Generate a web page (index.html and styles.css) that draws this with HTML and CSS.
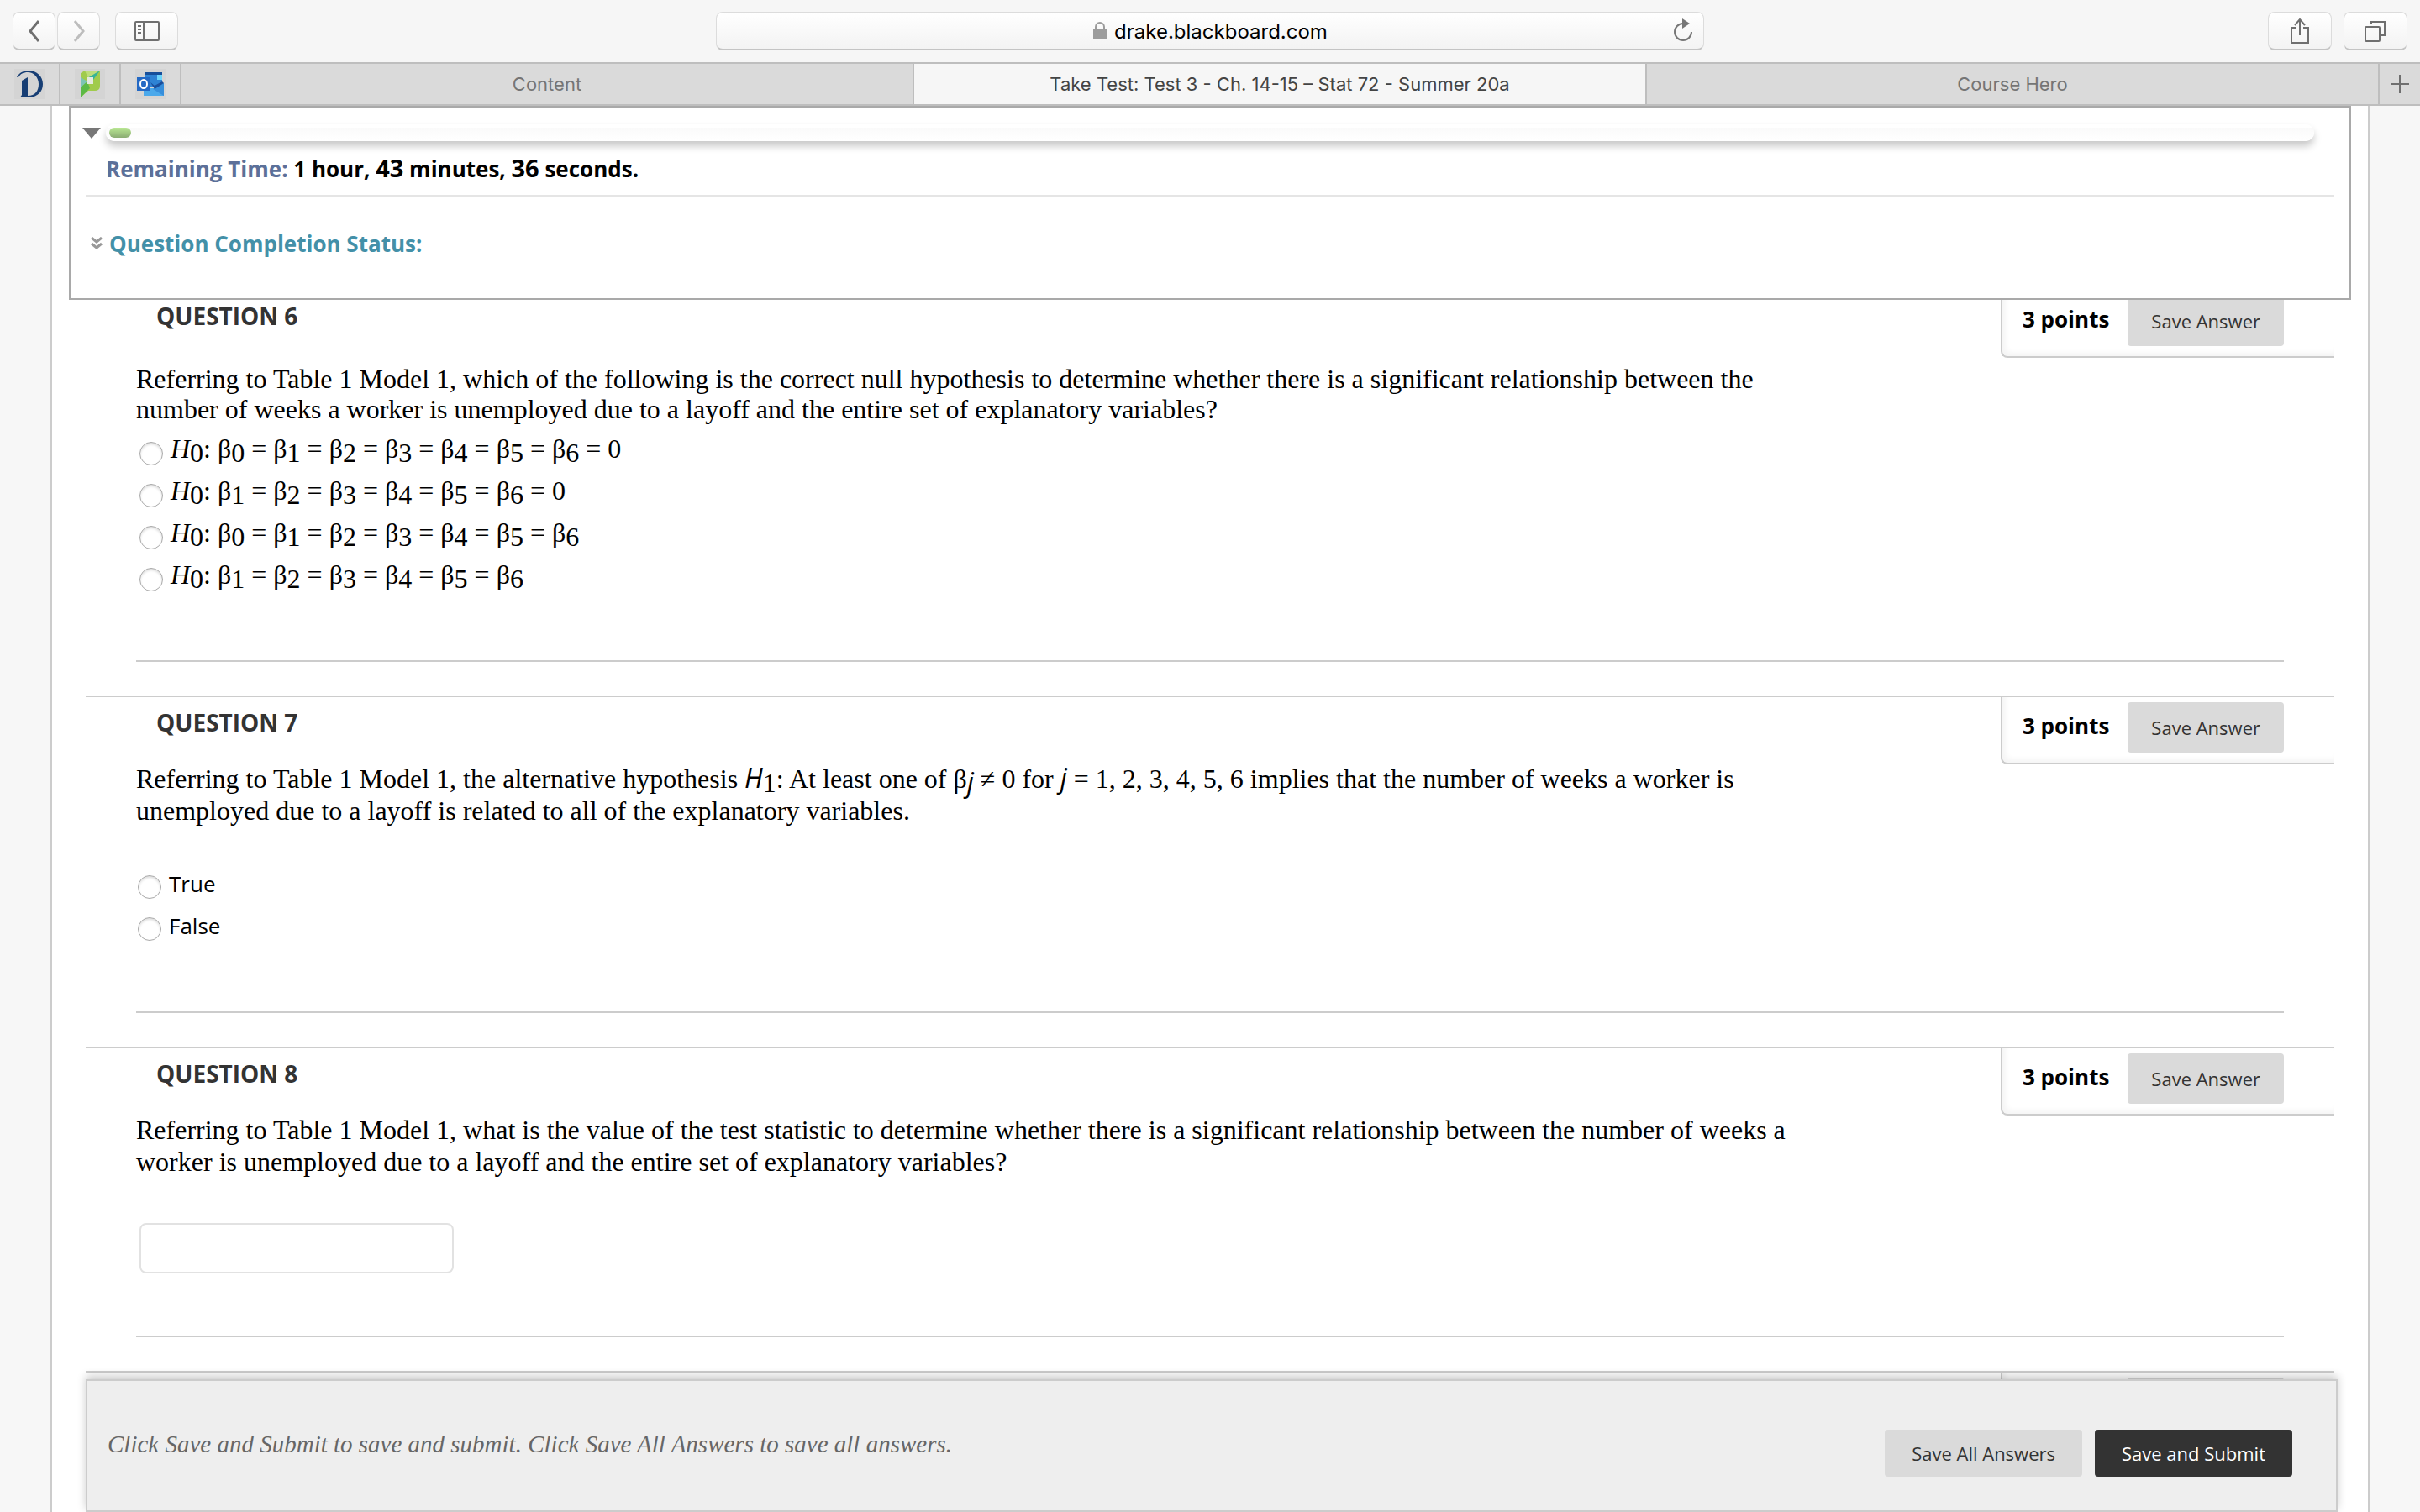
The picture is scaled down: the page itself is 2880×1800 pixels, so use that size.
FILE: index.html
```html
<!DOCTYPE html>
<html lang="en">
<head>
  <meta charset="UTF-8" />
  <meta name="viewport" content="width=device-width, initial-scale=1.0" />
  <title>Take Test: Test 3 - Ch. 14-15 – Stat 72 - Summer 20a</title>
  <link rel="stylesheet" href="styles.css">
</head>
<body>
  <!-- Browser toolbar -->
  <header class="toolbar">
    <div class="tool-group">
      <button class="tool nav" type="button" aria-label="Back">
        <svg width="14" height="26" viewBox="0 0 14 26" fill="none" stroke="#6f6f6f" stroke-width="3"><path d="M12 1 2 13 12 25"/></svg>
      </button>
      <button class="tool nav" type="button" aria-label="Forward">
        <svg width="14" height="26" viewBox="0 0 14 26" fill="none" stroke="#bdbdbd" stroke-width="3"><path d="M2 1 12 13 2 25"/></svg>
      </button>
      <button class="tool sidebar" type="button" aria-label="Show sidebar">
        <svg width="30" height="24" viewBox="0 0 30 24" fill="none" stroke="#6f6f6f" stroke-width="2"><rect x="1" y="1" width="28" height="22" rx="1"/><path d="M11 1v22M4 6h4M4 10h4M4 14h4"/></svg>
      </button>
    </div>
    <div class="address">
      <svg width="18" height="21" viewBox="0 0 18 21"><path d="M4 9V6a5 5 0 0 1 10 0v3" fill="none" stroke="#9c9c9c" stroke-width="2"/><rect x="1" y="8" width="16" height="13" rx="1" fill="#9c9c9c"/></svg>
      <span class="url">drake.blackboard.com</span>
      <button class="reload" type="button" aria-label="Reload">
        <svg width="24" height="28" viewBox="0 0 24 28"><path d="M12 6a10 10 0 1 0 10 10" fill="none" stroke="#777" stroke-width="2"/><path d="M11 0v12l9-6z" fill="#777"/></svg>
      </button>
    </div>
    <div class="tool-group right">
      <button class="tool wide" type="button" aria-label="Share">
        <svg width="24" height="32" viewBox="0 0 24 32" fill="none" stroke="#6f6f6f" stroke-width="2"><path d="M8 12H2v18h20V12h-6M12 21V3M6 9l6-7 6 7"/></svg>
      </button>
      <button class="tool wide" type="button" aria-label="Show all tabs">
        <svg width="26" height="26" viewBox="0 0 26 26" fill="none" stroke="#6f6f6f" stroke-width="2"><rect x="1" y="8" width="17" height="17" rx="1"/><path d="M8 4V2h16v16h-4"/></svg>
      </button>
    </div>
  </header>

  <nav class="tabs">
    <a class="pin" href="#" aria-label="Drake">
      <svg width="36" height="36" viewBox="0 0 36 36"><rect width="36" height="36" fill="#d4d4d4"/><path d="M3 10C6 4 12 2 17 2c10 0 17 7 17 16S28 33 19 34H7l2-3V14l7-4v22c9 0 13-6 13-14S23 4 16 4C11 4 7 6 5 10z" fill="#173e74"/></svg>
    </a>
    <a class="pin" href="#" aria-label="Portal">
      <svg width="36" height="36" viewBox="0 0 36 36"><rect width="36" height="36" fill="#d4d4d4"/><path d="M7 5l5-3h18v18q0 6-6 6h-8L7 34z" fill="#a0cb4c"/><path d="M30 2L16 11 12 2z" fill="#bddd7a"/><path d="M7 10l8 5-8 7z" fill="#7cc4b4"/><path d="M30 2L19 17l-4-6z" fill="#36b398"/><path d="M7 22l8-7 3 8-11 11z" fill="#5cb947"/><rect x="15" y="10" width="7" height="8" fill="#e4e9df"/></svg>
    </a>
    <a class="pin" href="#" aria-label="Outlook">
      <svg width="36" height="36" viewBox="0 0 36 36"><rect width="36" height="36" fill="#d4d4d4"/><path d="M12 4h20v18H12z" fill="#2f83d4"/><path d="M12 4h20v3H12z" fill="#174f9a"/><path d="M26 7h6v6h-6z" fill="#6ed4fa"/><path d="M12 23l10 0 12-6v15H10V23z" fill="#4ba9eb"/><path d="M34 17v15L21 24z" fill="#368edb"/><path d="M18 16l5 8 11-7-2-2-9 5z" fill="#1b4e9b"/><path d="M2 10h16v16H2z" fill="#2469c4"/><ellipse cx="10" cy="18" rx="4" ry="5" fill="none" stroke="#fff" stroke-width="2"/></svg>
    </a>
    <a class="tab" href="#">Content</a>
    <a class="tab active" href="#">Take Test: Test 3 - Ch. 14-15 – Stat 72 - Summer 20a</a>
    <a class="tab" href="#">Course Hero</a>
    <button class="new-tab" type="button" aria-label="New tab">
      <svg width="22" height="22" viewBox="0 0 22 22" stroke="#6f6f6f" stroke-width="2"><path d="M11 0v22M0 11h22"/></svg>
    </button>
  </nav>

  <main class="page">
    <!-- Timer and completion status -->
    <section class="status">
      <div class="progress-row">
        <svg width="22" height="14" viewBox="0 0 22 14"><path d="M0 1h22L11 14z" fill="#777"/></svg>
        <div class="progress"><div class="progress-fill"></div></div>
      </div>
      <p class="timer"><span>Remaining Time:</span> 1 hour, <b>43</b> minutes, <b>36</b> seconds.</p>
      <a class="completion" href="#">
        <svg width="16" height="16" viewBox="0 0 16 16" fill="none" stroke="#999" stroke-width="3"><path d="M2 1l6 5 6-5M2 8l6 5 6-5"/></svg>
        Question Completion Status:
      </a>
    </section>

    <form class="questions">
      <section class="question first">
        <div class="head">
          <h2>QUESTION 6</h2>
          <div class="points"><strong>3 points</strong><button class="btn" type="button">Save Answer</button></div>
        </div>
        <div class="body">
          <p class="text">Referring to Table 1 Model 1, which of the following is the correct null hypothesis to determine whether there is a significant relationship between the<br>number of weeks a worker is unemployed due to a layoff and the entire set of explanatory variables?</p>
          <div class="choices math">
            <label><input type="radio" name="q6"><span><i>H</i><sub>0</sub>: β<sub>0</sub> = β<sub>1</sub> = β<sub>2</sub> = β<sub>3</sub> = β<sub>4</sub> = β<sub>5</sub> = β<sub>6</sub> = 0</span></label>
            <label><input type="radio" name="q6"><span><i>H</i><sub>0</sub>: β<sub>1</sub> = β<sub>2</sub> = β<sub>3</sub> = β<sub>4</sub> = β<sub>5</sub> = β<sub>6</sub> = 0</span></label>
            <label><input type="radio" name="q6"><span><i>H</i><sub>0</sub>: β<sub>0</sub> = β<sub>1</sub> = β<sub>2</sub> = β<sub>3</sub> = β<sub>4</sub> = β<sub>5</sub> = β<sub>6</sub></span></label>
            <label><input type="radio" name="q6"><span><i>H</i><sub>0</sub>: β<sub>1</sub> = β<sub>2</sub> = β<sub>3</sub> = β<sub>4</sub> = β<sub>5</sub> = β<sub>6</sub></span></label>
          </div>
        </div>
      </section>

      <section class="question">
        <div class="head">
          <h2>QUESTION 7</h2>
          <div class="points"><strong>3 points</strong><button class="btn" type="button">Save Answer</button></div>
        </div>
        <div class="body">
          <p class="text">Referring to Table 1 Model 1, the alternative hypothesis <i class="sans">H</i><sub>1</sub>: At least one of β<sub><i class="sans">j</i></sub> ≠ 0 for <i class="sans">j</i> = 1, 2, 3, 4, 5, 6 implies that the number of weeks a worker is<br>unemployed due to a layoff is related to all of the explanatory variables.</p>
          <div class="choices plain">
            <label><input type="radio" name="q7"><span>True</span></label>
            <label><input type="radio" name="q7"><span>False</span></label>
          </div>
        </div>
      </section>

      <section class="question">
        <div class="head">
          <h2 id="q8">QUESTION 8</h2>
          <div class="points"><strong>3 points</strong><button class="btn" type="button">Save Answer</button></div>
        </div>
        <div class="body">
          <p class="text">Referring to Table 1 Model 1, what is the value of the test statistic to determine whether there is a significant relationship between the number of weeks a<br>worker is unemployed due to a layoff and the entire set of explanatory variables?</p>
          <input class="answer" type="text" aria-labelledby="q8">
        </div>
      </section>

      <section class="question">
        <div class="head">
          <div class="points"><strong>3 points</strong><button class="btn" type="button">Save Answer</button></div>
        </div>
      </section>
    </form>

    <footer class="submit-bar">
      <p>Click Save and Submit to save and submit. Click Save All Answers to save all answers.</p>
      <div class="actions">
        <button class="btn" type="button">Save All Answers</button>
        <button class="btn primary" type="submit">Save and Submit</button>
      </div>
    </footer>
  </main>
</body>
</html>
```
FILE: styles.css
```css
:root {
  --line: #cccccc;
  --chrome: #f6f6f6;
  --tab: #dadada;
  --tab-line: #bebebe;
  --button: #dadada;
}

* {
  box-sizing: border-box;
}

body {
  margin: 0;
  height: 100vh;
  display: flex;
  flex-direction: column;
  overflow: hidden;
  background: #f7f7f7;
  color: #000;
  font-family: "Open Sans", sans-serif;
  font-size: 26px;
}

h2, p {
  margin: 0;
}

button {
  font-family: inherit;
  border: none;
  padding: 0;
}

svg {
  display: block;
  flex: none;
}

/* Browser toolbar */
.toolbar {
  display: grid;
  grid-template-columns: 1fr 1176px 1fr;
  align-items: center;
  height: 76px;
  padding: 0 15px;
  background: var(--chrome);
  border-bottom: 2px solid var(--tab-line);
  font-family: Inter, sans-serif;
}

.tool-group {
  display: flex;
  gap: 2px;
}

.tool-group.right {
  justify-content: flex-end;
  gap: 14px;
}

.tool, .address {
  display: flex;
  align-items: center;
  justify-content: center;
  height: 46px;
  background: linear-gradient(#fff, #f3f3f3);
  border: 1px solid #dcdcdc;
  border-bottom: 2px solid #c4c4c4;
  border-radius: 8px;
}

.nav {
  width: 51px;
}

.sidebar {
  width: 75px;
  margin-left: 16px;
}

.wide {
  width: 76px;
}

.address {
  position: relative;
  gap: 8px;
  font-size: 24px;
}

.url {
  padding-top: 2px;
}

.reload {
  position: absolute;
  right: 12px;
  top: 7px;
  background: none;
}

/* Tab strip */
.tabs {
  display: flex;
  height: 50px;
  background: var(--tab);
  border-bottom: 2px solid var(--tab-line);
  font-family: Inter, sans-serif;
  font-size: 22px;
}

.pin, .tab {
  display: flex;
  align-items: center;
  justify-content: center;
  border-right: 2px solid var(--tab-line);
  color: #757575;
  text-decoration: none;
}

.pin {
  width: 72px;
}

.tab {
  flex: 1;
}

.tab.active {
  background: var(--chrome);
  color: #444;
}

.new-tab {
  width: 48px;
  display: grid;
  place-items: center;
  background: none;
}

/* Page */
.page {
  position: relative;
  flex: 1;
  min-height: 0;
  margin: 0 60px;
  padding: 0 20px;
  background: #fff;
  border: solid var(--line);
  border-width: 0 2px;
}

/* Sits over the top of the first question */
.status {
  position: relative;
  z-index: 1;
  height: 231px;
  padding: 20px 18px 0;
  background: #fff;
  border: 2px solid #a9a9a9;
  font-weight: bold;
}

.progress-row {
  display: flex;
  align-items: center;
  gap: 6px;
  margin: 0 24px 0 -4px;
}

.progress {
  flex: 1;
  height: 20px;
  padding: 4px;
  border-radius: 10px;
  background: linear-gradient(#fff 20%, #fafafa 20%, #fff);
  box-shadow: 0 6px 10px rgba(0, 0, 0, 0.22);
}

.progress-fill {
  width: 26px;
  height: 12px;
  border-radius: 6px;
  background: linear-gradient(#b9e793, #8bac73);
}

.timer {
  height: 66px;
  padding-left: 24px;
  line-height: 66px;
  border-bottom: 2px solid #e5e5e5;
}

.timer span {
  color: #5c7099;
}

.timer b {
  font-size: 29px;
  font-weight: inherit;
  line-height: 0;
}

.completion {
  display: flex;
  align-items: center;
  gap: 7px;
  margin: 38px 0 0 5px;
  color: #4390a8;
  text-decoration: none;
}

/* Questions */
.questions {
  margin: -13px 20px 0;
}

.question {
  border-top: 2px solid var(--line);
}

.question.first {
  border-color: transparent;
}

.head {
  display: flex;
  align-items: flex-start;
  justify-content: space-between;
  height: 72px;
  padding-left: 84px;
}

.head h2 {
  padding-top: 12px;
  font-size: 28px;
  line-height: 36px;
  color: #333;
}

.points {
  display: flex;
  align-items: center;
  gap: 22px;
  margin-left: auto;
  height: 80px;
  padding: 0 60px 6px 24px;
  border: solid var(--line);
  border-width: 0 0 2px 2px;
  border-bottom-left-radius: 8px;
  box-shadow: inset 4px -4px 6px #f5f5f5;
}

.points strong {
  padding-bottom: 4px;
}

.btn {
  height: 60px;
  padding: 0 28px;
  background: var(--button);
  border-radius: 4px;
  color: #333;
  font-size: 22px;
}

.body {
  margin: 0 60px 40px;
  border-bottom: 2px solid var(--line);
}

.text {
  padding-top: 6px;
  font-family: "Liberation Serif", serif;
  font-size: 32px;
  line-height: 38px;
}

.first .text {
  padding-top: 15px;
  line-height: 36px;
}

sub {
  font-size: inherit;
  line-height: 0;
  vertical-align: -5px;
}

.sans {
  font-family: "Open Sans", sans-serif;
  line-height: 0;
}

.choices label {
  display: flex;
  gap: 9px;
  height: 50px;
}

.choices input {
  appearance: none;
  flex: none;
  width: 28px;
  height: 28px;
  margin: 10px 0 0;
  border: 1px solid #a8a8a8;
  border-radius: 50%;
  background: #fff;
  box-shadow: inset 0 2px 3px #ddd;
}

.math {
  padding: 11px 0 70px 4px;
  font-family: "Liberation Serif", serif;
  font-size: 32px;
  line-height: 36px;
}

.plain {
  padding: 48px 0 72px 2px;
  line-height: 40px;
}

.answer {
  display: block;
  width: 374px;
  height: 60px;
  margin: 54px 0 74px 4px;
  border: 2px solid #e2e2e2;
  border-radius: 8px;
  background: #fff;
}

/* Bottom bar, stays over the questions */
.submit-bar {
  position: absolute;
  left: 40px;
  right: 36px;
  bottom: 0;
  z-index: 2;
  display: flex;
  align-items: center;
  justify-content: space-between;
  height: 158px;
  padding: 0 52px 4px 24px;
  background: #eee;
  border: 2px solid var(--line);
  box-shadow: 0 -4px 10px rgba(0, 0, 0, 0.2);
}

.submit-bar p {
  font-family: Georgia, "Liberation Serif", serif;
  font-size: 29px;
  font-style: italic;
  color: #666;
}

.actions {
  display: flex;
  gap: 15px;
  padding-top: 22px;
}

.actions .btn {
  height: 56px;
  padding: 0 32px;
}

.actions .primary {
  background: #333;
  color: #fff;
  font-weight: 500;
}
```
